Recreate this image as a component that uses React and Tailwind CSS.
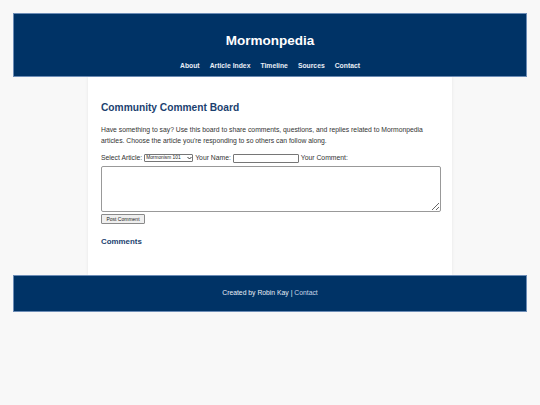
export default function App() {
  const nav = ['About', 'Article Index', 'Timeline', 'Sources', 'Contact']

  return (
    <div className="min-h-[405px] bg-[#f8f8f8] pt-[13px] font-['Liberation_Sans',Arial,sans-serif] text-[#222]">
      <header className="mx-[13px] h-[64px] border border-[#6d8db6] bg-[#003366] flex flex-col items-center pt-[18px]">
        <h1 className="text-[13.5px] leading-[17px] font-bold text-white">Mormonpedia</h1>
        <nav className="mt-[12px] flex gap-[10px] text-[6.8px] leading-[10px] font-bold text-[#e8eef6]">
          {nav.map((n) => (
            <a key={n}>{n}</a>
          ))}
        </nav>
      </header>

      <main className="mx-auto w-[364px] h-[198px] bg-white shadow-[0_0_3px_rgba(0,0,0,0.08)] px-[13px] pt-[23px]">
        <h2 className="text-[10.2px] leading-[16px] font-bold text-[#1b3f6f]">Community Comment Board</h2>
        <p className="mt-[8px] text-[6.8px] leading-[11px] text-[#333]">
          Have something to say? Use this board to share comments, questions, and replies related to Mormonpedia
          articles. Choose the article you're responding to so others can follow along.
        </p>
        <div className="mt-[7px] flex items-center text-[6.8px] leading-[10px] text-[#333]">
          <span>Select Article:</span>
          <span className="relative ml-[2px] inline-flex">
            <select className="appearance-none w-[49px] h-[8px] border border-[#767676] rounded-[1px] text-[4.8px] leading-[6px] pl-[1px] pr-[8px] bg-white text-[#222]">
              <option>Mormonism 101</option>
            </select>
            <svg className="absolute right-[1.5px] top-[2px] pointer-events-none" width="5" height="4" viewBox="0 0 10 8">
              <path d="M1 2 L5 6 L9 2" fill="none" stroke="#222" strokeWidth="1.8" />
            </svg>
          </span>
          <span className="ml-[2px]">Your Name:</span>
          <input className="ml-[2px] w-[66px] h-[9px] border border-[#767676] rounded-[1px] bg-white" />
          <span className="ml-[2px]">Your Comment:</span>
        </div>
        <textarea className="mt-[3px] block w-[340px] h-[46px] border border-[#999] rounded-[2px] resize" />
        <button className="mt-[2px] block h-[10px] w-[44px] border border-[#8a8a8a] rounded-[1px] bg-[#efefef] text-[5px] leading-[8px] text-[#222]">
          Post Comment
        </button>
        <h3 className="mt-[12px] text-[7.9px] leading-[12px] font-bold text-[#1b3f6f]">Comments</h3>
      </main>

      <footer className="mx-[13px] h-[37px] border border-[#6d8db6] bg-[#003366] flex items-center justify-center text-[6.8px] text-[#e8eef6]">
        <span>
          Created by Robin Kay | <a className="text-[#c8d6e8]">Contact</a>
        </span>
      </footer>
    </div>
  )
}
